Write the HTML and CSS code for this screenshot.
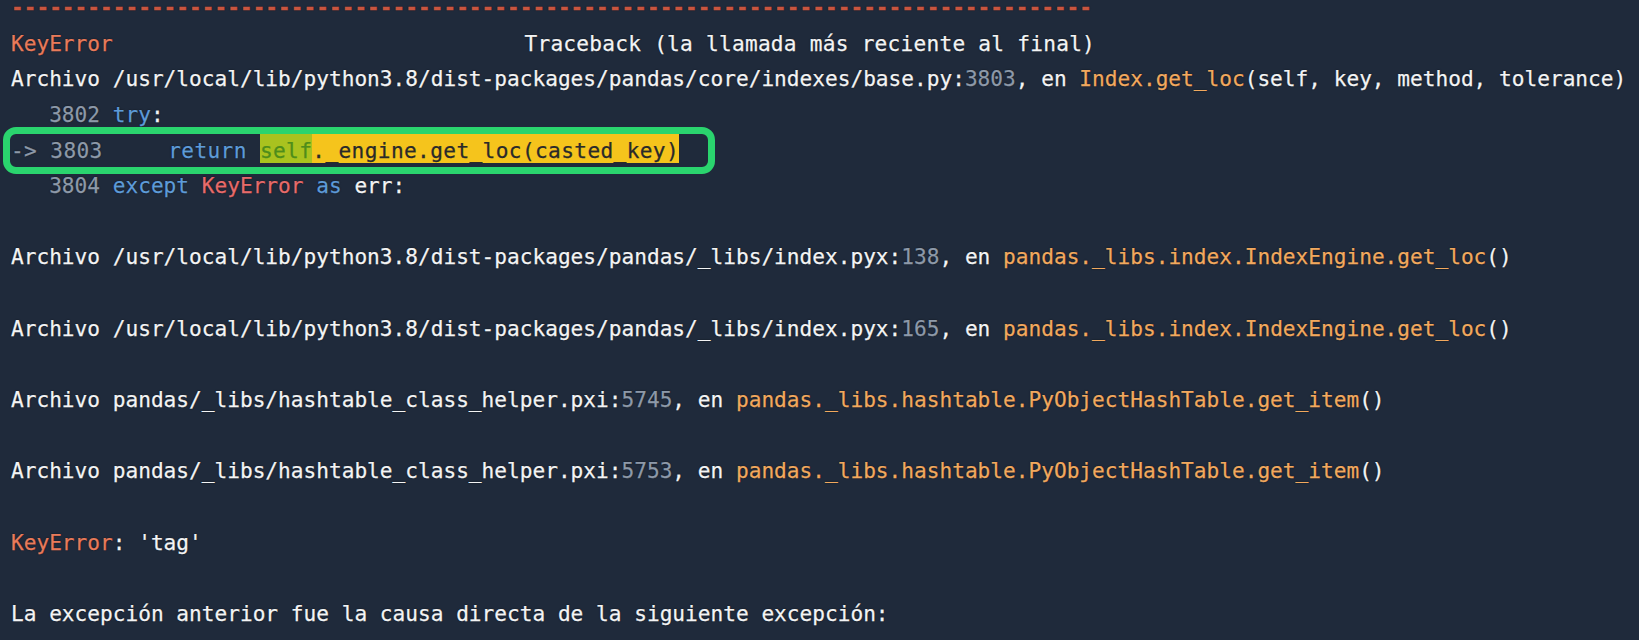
FILE: index.html
```html
<!DOCTYPE html>
<html lang="es">
<head>
<meta charset="utf-8">
<title>Traceback</title>
<link rel="stylesheet" href="styles.css">
</head>
<body>
<main class="tb">
<div class="ln dash">-------------------------------------------------------------------------------------</div>
<div class="ln"><span class="ename">KeyError</span>                                 <span class="head">Traceback (la llamada más reciente al final)</span></div>
<div class="ln">Archivo /usr/local/lib/python3.8/dist-packages/pandas/core/indexes/base.py:<span class="num">3803</span>, en <span class="fn">Index.get_loc</span>(self, key, method, tolerance)</div>
<div class="ln">   <span class="num">3802</span> <span class="kw">try</span>:</div>
<div class="ln cur"><span class="num">-&gt; 3803</span>     <span class="kw">return</span> <span class="hl-self">self</span><span class="hl">._engine.get_loc(casted_key)</span></div>
<div class="ln">   <span class="num">3804</span> <span class="kw">except</span> <span class="exc">KeyError</span> <span class="kw">as</span> err:</div>
<div class="ln"> </div>
<div class="ln">Archivo /usr/local/lib/python3.8/dist-packages/pandas/_libs/index.pyx:<span class="num">138</span>, en <span class="fn">pandas._libs.index.IndexEngine.get_loc</span>()</div>
<div class="ln"> </div>
<div class="ln">Archivo /usr/local/lib/python3.8/dist-packages/pandas/_libs/index.pyx:<span class="num">165</span>, en <span class="fn">pandas._libs.index.IndexEngine.get_loc</span>()</div>
<div class="ln"> </div>
<div class="ln">Archivo pandas/_libs/hashtable_class_helper.pxi:<span class="num">5745</span>, en <span class="fn">pandas._libs.hashtable.PyObjectHashTable.get_item</span>()</div>
<div class="ln"> </div>
<div class="ln">Archivo pandas/_libs/hashtable_class_helper.pxi:<span class="num">5753</span>, en <span class="fn">pandas._libs.hashtable.PyObjectHashTable.get_item</span>()</div>
<div class="ln"> </div>
<div class="ln"><span class="ename">KeyError</span>: 'tag'</div>
<div class="ln"> </div>
<div class="ln">La excepción anterior fue la causa directa de la siguiente excepción:</div>
</main>
</body>
</html>
```
FILE: styles.css
```css
html, body {
  margin: 0;
  padding: 0;
  background: #1f2a3b;
  height: 100%;
  overflow: hidden;
}

.tb {
  display: flex;
  flex-direction: column;
  margin: -10px 0 0 11px;
  font-family: "DejaVu Sans Mono", "Liberation Mono", monospace;
  font-size: 21.13px;
  line-height: 35.65px;
  color: #f3f4f5;
  -webkit-text-stroke: 0.25px currentColor;
  text-shadow: 0 0 1.5px rgba(0, 0, 0, 0.8);
}

.ln {
  white-space: pre;
  height: 35.65px;
}

.dash {
  color: #c9553f;
  font-weight: bold;
}

.head {
  margin-left: -8px;
  letter-spacing: 0.25px;
}

.ename { color: #e87b5b; }
.exc { color: #e66b6b; }
.num { color: #8d99a9; }
.kw { color: #5e9bd8; }
.fn { color: #f1a95f; }

.cur {
  position: relative;
  letter-spacing: 0.38px;
}

.cur::after {
  content: "";
  position: absolute;
  left: -8px;
  top: -6px;
  width: 698px;
  height: 33px;
  border: 7px solid #2ad46e;
  border-radius: 13px;
  pointer-events: none;
}

.hl-self {
  background: #a9c21f;
  color: #4e8d1a;
  padding-top: 4px;
  text-shadow: none;
}

.hl {
  background: #f5c41c;
  color: #2a2a2a;
  padding-top: 4px;
  text-shadow: none;
}
```
